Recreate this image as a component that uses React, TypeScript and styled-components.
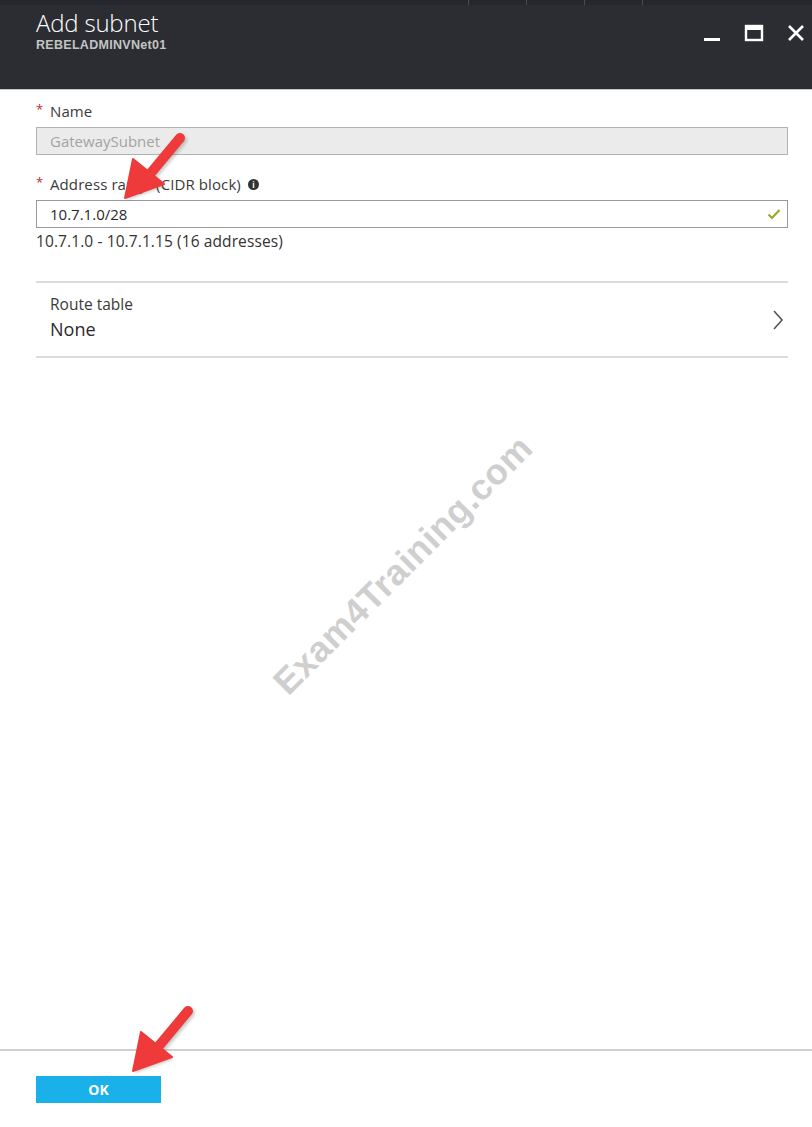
import React from 'react';
import styled, { createGlobalStyle } from 'styled-components';

const GlobalStyle = createGlobalStyle`
  html, body {
    margin: 0;
    padding: 0;
    background: #ffffff;
  }
  body {
    font-family: "Open Sans", "Noto Sans", "Liberation Sans", sans-serif;
  }
`;

const Blade = styled.div`
  position: relative;
  width: 812px;
  height: 1127px;
  display: flex;
  flex-direction: column;
  background: #ffffff;
  overflow: hidden;
`;

const Header = styled.header`
  height: 89px;
  flex-shrink: 0;
  background: #2b2d32;
  border-bottom: 1px solid #c9c9c9;
  display: flex;
  flex-direction: column;
`;

const TopStrip = styled.div`
  height: 5px;
  display: flex;
  justify-content: flex-end;
  padding-right: 112px;
  background: #25272c;
`;

const StripTab = styled.div`
  width: 57px;
  border-left: 1px solid #4a4c52;
`;

const HeaderRow = styled.div`
  display: flex;
  justify-content: space-between;
  padding: 4px 6px 0 36px;
`;

const TitleBlock = styled.div`
  display: flex;
  flex-direction: column;
`;

const Title = styled.h1`
  margin: 0;
  font-size: 24px;
  font-weight: 300;
  line-height: 28px;
  color: #ffffff;
  letter-spacing: -0.2px;
`;

const Subtitle = styled.div`
  font-family: "Liberation Sans", Arial, sans-serif;
  font-size: 12.5px;
  font-weight: 700;
  color: #c4c4c4;
  line-height: 14px;
  letter-spacing: 0.3px;
  margin-top: 1px;
`;

const Controls = styled.div`
  display: flex;
  align-items: center;
  gap: 22px;
  padding-top: 5px;
`;

const ControlIcon = styled.svg`
  width: 20px;
  height: 20px;
  display: block;
`;

const Content = styled.main`
  flex: 1;
  padding: 0 24px 0 36px;
  display: flex;
  flex-direction: column;
`;

const Label = styled.label<{ $top?: number }>`
  display: flex;
  align-items: center;
  gap: 5px;
  font-size: 15px;
  color: #3a3a3a;
  height: 22px;
  margin-top: ${p => p.$top ?? 0}px;
  margin-bottom: 5px;
  letter-spacing: 0.1px;
`;

const Star = styled.span`
  color: #c3262f;
  font-size: 13px;
  width: 9px;
  line-height: 1;
  position: relative;
  top: -2px;
`;

const InfoDot = styled.span`
  display: inline-flex;
  align-items: center;
  justify-content: center;
  width: 11px;
  height: 11px;
  border-radius: 50%;
  background: #333;
  color: #fff;
  font-size: 8px;
  font-weight: 700;
  margin-left: 2px;
`;

const InputBox = styled.div<{ $disabled?: boolean }>`
  height: 28px;
  box-sizing: border-box;
  display: flex;
  align-items: center;
  justify-content: space-between;
  padding: 0 6px 0 13px;
  border: 1px solid ${p => (p.$disabled ? '#b2b2b2' : '#9b97a0')};
  background: ${p => (p.$disabled ? '#ebebeb' : '#ffffff')};
  color: ${p => (p.$disabled ? '#a4a4a4' : '#2a2a2a')};
  font-size: 15px;
`;

const Hint = styled.div`
  font-size: 15.5px;
  color: #333;
  margin-top: 2px;
  letter-spacing: 0.1px;
`;

const Divider = styled.hr<{ $top?: number }>`
  border: 0;
  border-top: 2px solid #dcdcdc;
  margin: ${p => p.$top ?? 0}px 0 0 0;
`;

const NavRow = styled.div`
  height: 73px;
  display: flex;
  align-items: center;
  justify-content: space-between;
  padding: 0 4px 0 14px;
`;

const NavText = styled.div`
  display: flex;
  flex-direction: column;
  margin-top: -3px;
`;

const NavLabel = styled.div`
  font-size: 15.5px;
  color: #3a3a3a;
  line-height: 22px;
`;

const NavValue = styled.div`
  font-size: 18px;
  color: #2a2a2a;
  line-height: 28px;
`;

const Footer = styled.footer`
  border-top: 2px solid #d0d0d0;
  height: 78px;
  flex-shrink: 0;
  padding: 25px 0 0 36px;
  box-sizing: border-box;
`;

const OkButton = styled.button`
  width: 125px;
  height: 27px;
  border: 0;
  background: #1ab1ea;
  color: #ffffff;
  font-family: "Open Sans", "Liberation Sans", sans-serif;
  font-weight: 700;
  font-size: 14px;
  padding: 0;
  cursor: pointer;
`;

const Watermark = styled.div`
  position: absolute;
  left: 403px;
  top: 565px;
  transform: translate(-50%, -50%) rotate(-45deg);
  font-family: "Liberation Sans", Arial, sans-serif;
  font-weight: 700;
  font-size: 36px;
  color: #cfcfcf;
  white-space: nowrap;
  pointer-events: none;
  letter-spacing: 0.5px;
`;

const Arrow = styled.svg`
  position: absolute;
  pointer-events: none;
  overflow: visible;
`;

function RedArrow({ left, top }: { left: number; top: number }) {
  // tail at upper right, tip at lower left
  return (
    <Arrow style={{ left, top }} width={64} height={68} viewBox="0 0 64 68">
      <defs>
        <filter id={`sh${top}`} x="-30%" y="-30%" width="160%" height="160%">
          <feGaussianBlur stdDeviation="1.4" />
        </filter>
      </defs>
      <g filter={`url(#sh${top})`} opacity="0.3" transform="translate(2,2)">
        <path d="M56 4 L26 40" stroke="#555" strokeWidth="10" strokeLinecap="round" />
        <path d="M1 64 L9 25 L40 50 Z" fill="#555" />
      </g>
      <path d="M56 4 L26 40" stroke="#ee3a3a" strokeWidth="10" strokeLinecap="round" />
      <path d="M1 64 L9 25 L40 50 Z" fill="#ee3a3a" strokeLinejoin="round" stroke="#ee3a3a" strokeWidth="2" />
    </Arrow>
  );
}

export default function App() {
  return (
    <>
      <GlobalStyle />
      <Blade>
        <Header>
          <TopStrip>
            <StripTab />
            <StripTab />
            <StripTab />
            <StripTab />
          </TopStrip>
          <HeaderRow>
            <TitleBlock>
              <Title>Add subnet</Title>
              <Subtitle>REBELADMINVNet01</Subtitle>
            </TitleBlock>
            <Controls>
              <ControlIcon viewBox="0 0 20 20">
                <rect x="2" y="15" width="16" height="3" fill="#fff" />
              </ControlIcon>
              <ControlIcon viewBox="0 0 20 20">
                <rect x="2" y="3" width="16" height="14" fill="none" stroke="#fff" strokeWidth="2.4" />
                <rect x="2" y="3" width="16" height="4" fill="#fff" />
              </ControlIcon>
              <ControlIcon viewBox="0 0 20 20">
                <path d="M3 3 L17 17 M17 3 L3 17" stroke="#fff" strokeWidth="2.6" />
              </ControlIcon>
            </Controls>
          </HeaderRow>
        </Header>

        <Content>
          <Label $top={10}>
            <Star>*</Star>
            Name
          </Label>
          <InputBox $disabled>GatewaySubnet</InputBox>

          <Label $top={18}>
            <Star>*</Star>
            Address range (CIDR block)
            <InfoDot>i</InfoDot>
          </Label>
          <InputBox>
            10.7.1.0/28
            <svg width="14" height="12" viewBox="0 0 14 12">
              <path d="M1.5 6.5 L5 10 L12.5 2" fill="none" stroke="#93ad2c" strokeWidth="2.2" />
            </svg>
          </InputBox>
          <Hint>10.7.1.0 - 10.7.1.15 (16 addresses)</Hint>

          <Divider $top={29} />
          <NavRow>
            <NavText>
              <NavLabel>Route table</NavLabel>
              <NavValue>None</NavValue>
            </NavText>
            <svg width="12" height="22" viewBox="0 0 12 22">
              <path d="M2 2 L10 11 L2 20" fill="none" stroke="#555" strokeWidth="1.6" />
            </svg>
          </NavRow>
          <Divider />
        </Content>

        <Footer>
          <OkButton>OK</OkButton>
        </Footer>

        <Watermark>Exam4Training.com</Watermark>
        <RedArrow left={124} top={134} />
        <RedArrow left={132} top={1007} />
      </Blade>
    </>
  );
}
